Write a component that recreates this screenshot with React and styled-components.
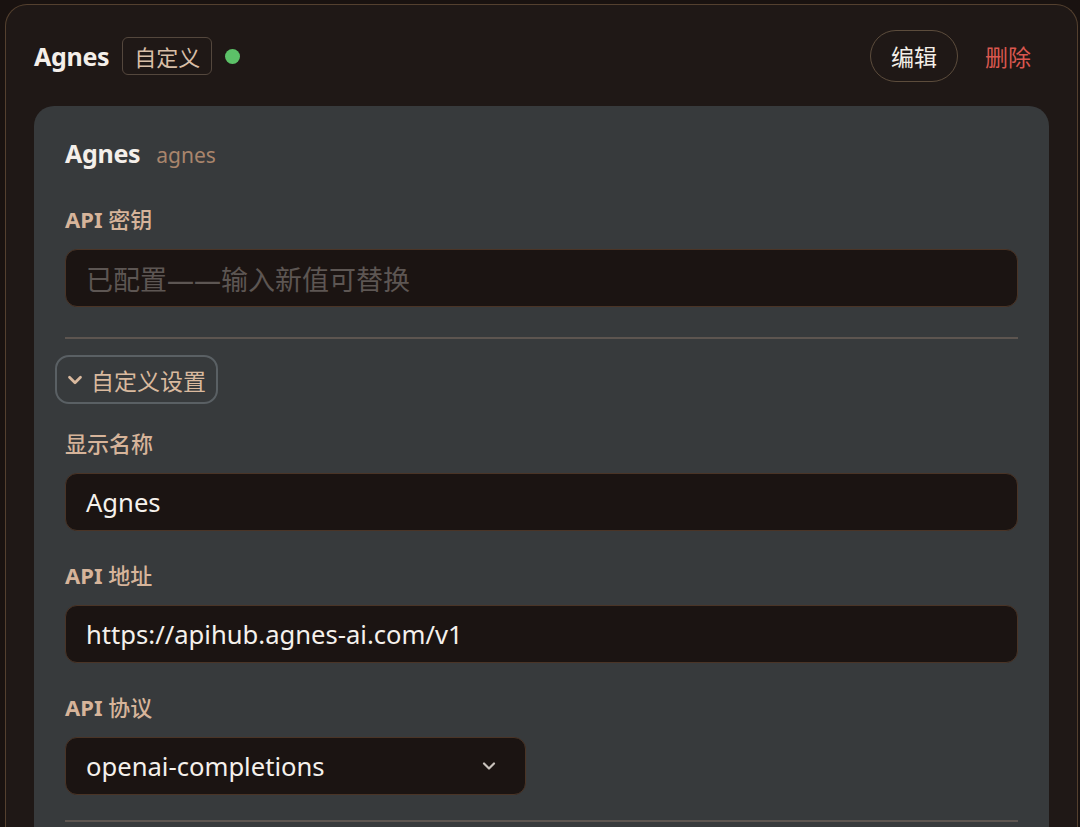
import React from "react";
import styled, { createGlobalStyle } from "styled-components";

const Global = createGlobalStyle`
  html, body {
    margin: 0;
    padding: 0;
    background: #191210;
  }
  body {
    font-family: "Noto Sans", "Noto Sans CJK SC", sans-serif;
    color: #f2ece6;
  }
`;

const Page = styled.div`
  width: 1080px;
  height: 827px;
  overflow: hidden;
  padding: 4px 2px 0 5px;
  box-sizing: border-box;
`;

const Card = styled.section`
  background: #1f1816;
  border: 1px solid #54402f;
  border-bottom: none;
  border-radius: 22px 22px 0 0;
  padding: 24px 28px 0 28px;
  height: 900px;
  box-sizing: border-box;
`;

const Header = styled.div`
  display: flex;
  align-items: center;
  height: 54px;
  margin-bottom: 23px;
`;

const Title = styled.h2`
  margin: 0;
  font-size: 25px;
  font-weight: 700;
  color: #f4efea;
  letter-spacing: -0.3px;
`;

const Badge = styled.span`
  margin-left: 13px;
  padding: 0 11px;
  height: 36px;
  display: inline-flex;
  align-items: center;
  border: 1px solid #54473d;
  border-radius: 6px;
  font-size: 22px;
  color: #d8bea6;
`;

const Dot = styled.span`
  width: 15px;
  height: 15px;
  border-radius: 50%;
  background: #5cc168;
  margin-left: 13px;
`;

const Actions = styled.div`
  margin-left: auto;
  display: flex;
  align-items: center;
  gap: 27px;
  padding-right: 18px;
`;

const EditButton = styled.button`
  height: 52px;
  padding: 0 20px;
  border-radius: 26px;
  border: 1.5px solid #5c4c3c;
  background: transparent;
  color: #f3eee8;
  font-family: inherit;
  font-size: 23px;
`;

const DeleteButton = styled.button`
  border: none;
  background: transparent;
  padding: 0;
  color: #d9574f;
  font-family: inherit;
  font-size: 23px;
`;

const Panel = styled.div`
  background: #373a3c;
  border-radius: 20px;
  padding: 30px 31px 0 31px;
  height: 760px;
  box-sizing: border-box;
`;

const PanelHead = styled.div`
  display: flex;
  align-items: baseline;
  gap: 16px;
  margin-bottom: 34px;
`;

const PanelTitle = styled.span`
  font-size: 25px;
  font-weight: 700;
  color: #f4efea;
  letter-spacing: -0.3px;
`;

const Slug = styled.span`
  font-size: 21px;
  color: #a9856c;
`;

const Field = styled.div`
  display: flex;
  flex-direction: column;
  gap: 15px;
  margin-bottom: ${(p) => p.$gap || 29}px;
`;

const Label = styled.label`
  font-size: 22px;
  font-weight: 500;
  color: #d6b49a;
  line-height: 30px;

  b {
    font-weight: 700;
  }
`;

const Input = styled.div`
  height: 58px;
  width: ${(p) => p.$width || "100%"};
  box-sizing: border-box;
  background: #1b1412;
  border: 1px solid #4a3426;
  border-radius: 12px;
  padding: 0 26px 0 20px;
  display: flex;
  align-items: center;
  font-size: ${(p) => (p.$placeholder ? 27 : 25.6)}px;
  color: ${(p) => (p.$placeholder ? "#5d5653" : "#f5f1ec")};
`;

const Chevron = styled.svg`
  margin-left: auto;
  flex-shrink: 0;
`;

const Divider = styled.hr`
  border: none;
  height: 2px;
  background: #5d5550;
  margin: 0 0 ${(p) => p.$after || 17}px 0;
`;

const Toggle = styled.button`
  display: inline-flex;
  align-items: center;
  gap: 5px;
  height: 49px;
  margin: 0 0 24px -10px;
  padding: 0 10px 0 7px;
  background: transparent;
  border: 2px solid #5a6064;
  border-radius: 14px;
  color: #d9b99e;
  font-family: inherit;
  font-size: 23px;
`;

export default function App() {
  return (
    <Page>
      <Global />
      <Card>
        <Header>
          <Title>Agnes</Title>
          <Badge>自定义</Badge>
          <Dot />
          <Actions>
            <EditButton>编辑</EditButton>
            <DeleteButton>删除</DeleteButton>
          </Actions>
        </Header>
        <Panel>
          <PanelHead>
            <PanelTitle>Agnes</PanelTitle>
            <Slug>agnes</Slug>
          </PanelHead>
          <Field $gap={30}>
            <Label><b>API</b> 密钥</Label>
            <Input $placeholder>已配置——输入新值可替换</Input>
          </Field>
          <Divider $after={16} />
          <Toggle>
            <svg width="22" height="22" viewBox="0 0 24 24" fill="none" stroke="#d9b99e" strokeWidth="3" strokeLinecap="round" strokeLinejoin="round">
              <path d="M6 9l6 6 6-6" />
            </svg>
            自定义设置
          </Toggle>
          <Field>
            <Label>显示名称</Label>
            <Input>Agnes</Input>
          </Field>
          <Field>
            <Label><b>API</b> 地址</Label>
            <Input>https://apihub.agnes-ai.com/v1</Input>
          </Field>
          <Field $gap={25}>
            <Label><b>API</b> 协议</Label>
            <Input $width="461px">
              openai-completions
              <Chevron width="20" height="20" viewBox="0 0 24 24" fill="none" stroke="#c9c2bc" strokeWidth="2.6" strokeLinecap="round" strokeLinejoin="round">
                <path d="M6 9l6 6 6-6" />
              </Chevron>
            </Input>
          </Field>
          <Divider />
        </Panel>
      </Card>
    </Page>
  );
}
